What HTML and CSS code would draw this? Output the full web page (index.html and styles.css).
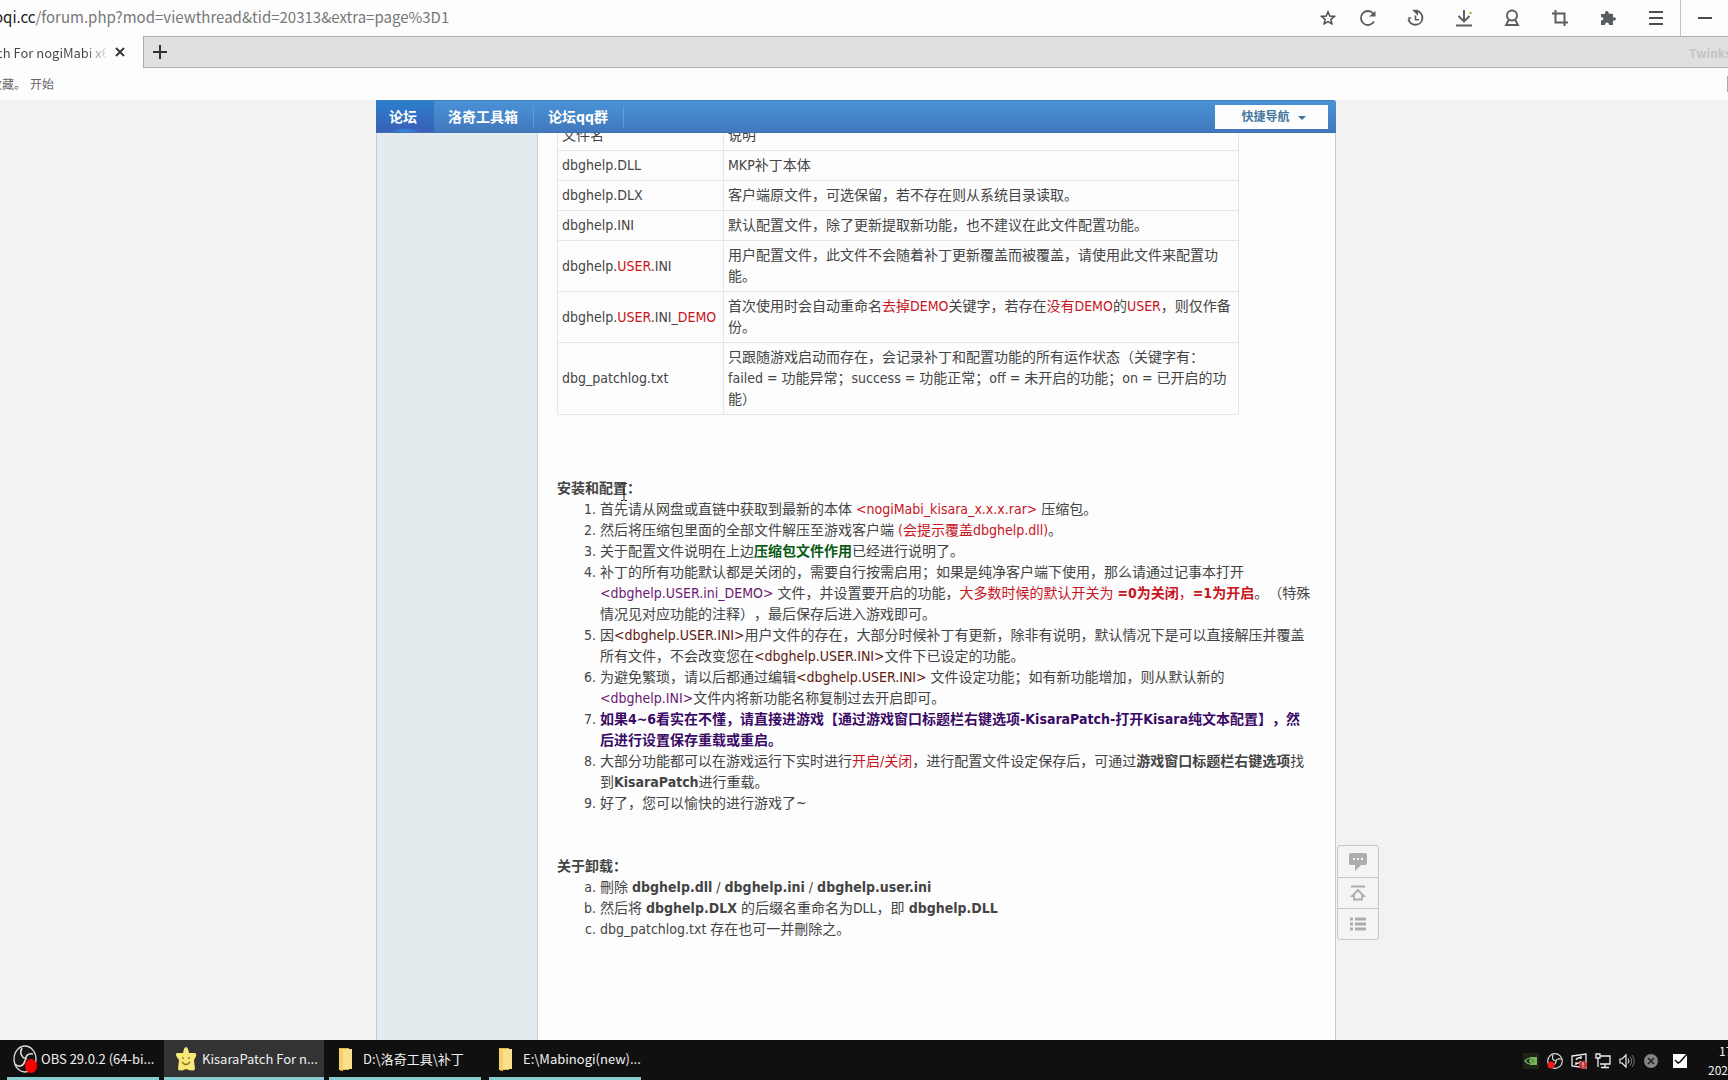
FILE: index.html
```html
<!DOCTYPE html>
<html lang="zh-CN">
<head>
<meta charset="utf-8">
<title>KisaraPatch For nogiMabi x64</title>
<link rel="stylesheet" href="styles.css">
</head>
<body>
<header class="chrome">
  <div class="address-row">
    <div class="url"><span class="host">oqi.cc</span>/forum.php?mod=viewthread&amp;tid=20313&amp;extra=page%3D1</div>
    <div class="tools">
      <button class="tool tool-star" aria-label="收藏"><svg width="16" height="16" viewBox="0 0 16 16"><path d="M8 1.8l1.8 4.2 4.5.4-3.4 3 1 4.4L8 11.5l-3.900 2.300 1-4.400-3.400-3 4.500-.4z" fill="none" stroke="#4a4d50" stroke-width="1.500"/></svg></button>
      <button class="tool" aria-label="刷新"><svg width="18" height="18" viewBox="0 0 18 18"><path d="M14.300 4.500A7 7 0 1 0 15 12.500" fill="none" stroke="#5a5d60" stroke-width="1.800"/><path d="M16.500 2v5.500H10z" fill="#5a5d60"/></svg></button>
      <button class="tool" aria-label="历史"><svg width="18" height="18" viewBox="0 0 18 18"><path d="M10 2a7 7 0 1 1-8.500 8" fill="none" stroke="#5a5d60" stroke-width="1.900"/><path d="M5 .8h6v6z" fill="#5a5d60"/><path d="M8.500 6.500v4.200H12M1.200 9h3" fill="none" stroke="#5a5d60" stroke-width="1.600"/></svg></button>
      <button class="tool" aria-label="下载"><svg width="18" height="18" viewBox="0 0 18 18"><path d="M9 1v12M3.500 7L9 12.500 14.500 7M1 16.500h16" fill="none" stroke="#5a5d60" stroke-width="1.900"/><circle cx="15.500" cy="4" r="1.300" fill="#8bc34a"/></svg></button>
      <button class="tool" aria-label="用户"><svg width="18" height="18" viewBox="0 0 18 18"><circle cx="9" cy="6.500" r="5" fill="none" stroke="#5a5d60" stroke-width="1.900"/><path d="M6 10.500L3 16h12l-3-5.500" fill="none" stroke="#5a5d60" stroke-width="1.900"/></svg></button>
      <button class="tool" aria-label="截图"><svg width="18" height="18" viewBox="0 0 18 18"><path d="M1 4.500h12.500V17M4.500 1v12.500H17" fill="none" stroke="#5a5d60" stroke-width="2"/></svg></button>
      <button class="tool" aria-label="扩展"><svg width="18" height="18" viewBox="0 0 18 18"><path d="M2 5h4C5 1 10.500 1 9.500 4.500L14 5v3.500c4-1 4 4 0 3V16h-4c.5-3.500-4.500-3.500-4 0H2v-4.500c3.200 0 3.200-3.500 0-3.500z" fill="#5a5d60"/></svg></button>
      <button class="tool" aria-label="菜单"><svg width="18" height="18" viewBox="0 0 18 18"><path d="M2 3h14M2 9h14M2 15h14" stroke="#4a4d50" stroke-width="2"/></svg></button>
      <button class="tool tool-min" aria-label="最小化"><svg width="18" height="18" viewBox="0 0 18 18"><path d="M2 9h14" stroke="#4a4d50" stroke-width="2"/></svg></button>
    </div>
  </div>
  <div class="tab-row">
    <div class="tab"><span class="tab-title">ch For nogiMabi x6</span><button class="tab-close" aria-label="关闭标签"><svg width="10" height="10" viewBox="0 0 10 10"><path d="M1 1l8 8M9 1L1 9" stroke="#333" stroke-width="1.800"/></svg></button></div>
    <div class="tab-strip">
      <button class="tab-new" aria-label="新建标签"><svg width="14" height="14" viewBox="0 0 14 14"><path d="M7 0v14M0 7h14" stroke="#333" stroke-width="2"/></svg></button>
      <span class="theme">Twinks</span>
    </div>
  </div>
  <div class="bookmarks"><span class="hint">收藏。</span><a href="#start">开始</a><span class="edge"></span></div>
</header>

<main class="page">
  <div class="forum">
    <nav class="nav">
      <a class="nav-item nav-active" href="#forum">论坛</a>
      <a class="nav-item" href="#tools">洛奇工具箱</a>
      <a class="nav-item" href="#qq">论坛qq群</a>
      <button class="quick">快捷导航<span class="caret"></span></button>
    </nav>
    <div class="thread">
      <aside class="author"></aside>
      <article class="post">
        <table class="files">
          <tr><td>文件名</td><td>说明</td></tr>
          <tr><td>dbghelp.DLL</td><td>MKP补丁本体</td></tr>
          <tr><td>dbghelp.DLX</td><td>客户端原文件，可选保留，若不存在则从系统目录读取。</td></tr>
          <tr><td>dbghelp.INI</td><td>默认配置文件，除了更新提取新功能，也不建议在此文件配置功能。</td></tr>
          <tr><td>dbghelp.<span class="red">USER</span>.INI</td><td>用户配置文件，此文件不会随着补丁更新覆盖而被覆盖，请使用此文件来配置功<br>能。</td></tr>
          <tr><td>dbghelp.<span class="red">USER</span>.INI_<span class="red">DEMO</span></td><td>首次使用时会自动重命名<span class="red">去掉DEMO</span>关键字，若存在<span class="red">没有DEMO</span>的<span class="red">USER</span>，则仅作备<br>份。</td></tr>
          <tr><td>dbg_patchlog.txt</td><td>只跟随游戏启动而存在，会记录补丁和配置功能的所有运作状态（关键字有：<br>failed = 功能异常；success = 功能正常；off = 未开启的功能；on = 已开启的功<br>能）</td></tr>
        </table>

        <h2>安装和配置：</h2>
        <ol class="steps">
          <li>首先请从网盘或直链中获取到最新的本体 <span class="red">&lt;nogiMabi_kisara_x.x.x.rar&gt;</span> 压缩包。</li>
          <li>然后将压缩包里面的全部文件解压至游戏客户端 <span class="red">(会提示覆盖dbghelp.dll)</span>。</li>
          <li>关于配置文件说明在上边<b class="green">压缩包文件作用</b>已经进行说明了。</li>
          <li>补丁的所有功能默认都是关闭的，需要自行按需启用；如果是纯净客户端下使用，那么请通过记事本打开<br><span class="purple">&lt;dbghelp.USER.ini_DEMO&gt;</span> 文件，并设置要开启的功能，<span class="red">大多数时候的默认开关为 <b>=0为关闭</b>，<b>=1为开启</b></span>。（特殊<br>情况见对应功能的注释），最后保存后进入游戏即可。</li>
          <li>因<span class="brown">&lt;dbghelp.USER.INI&gt;</span>用户文件的存在，大部分时候补丁有更新，除非有说明，默认情况下是可以直接解压并覆盖<br>所有文件，不会改变您在<span class="brown">&lt;dbghelp.USER.INI&gt;</span>文件下已设定的功能。</li>
          <li>为避免繁琐，请以后都通过编辑<span class="brown">&lt;dbghelp.USER.INI&gt;</span> 文件设定功能；如有新功能增加，则从默认新的<br><span class="purple">&lt;dbghelp.INI&gt;</span>文件内将新功能名称复制过去开启即可。</li>
          <li><b class="indigo">如果4~6看实在不懂，请直接进游戏【通过游戏窗口标题栏右键选项-KisaraPatch-打开Kisara纯文本配置】，然<br>后进行设置保存重载或重启。</b></li>
          <li>大部分功能都可以在游戏运行下实时进行<span class="red">开启/关闭</span>，进行配置文件设定保存后，可通过<b>游戏窗口标题栏右键选项</b>找<br>到<b>KisaraPatch</b>进行重载。</li>
          <li>好了，您可以愉快的进行游戏了~</li>
        </ol>

        <h2>关于卸载：</h2>
        <ol class="steps alpha">
          <li>刪除 <b>dbghelp.dll</b> / <b>dbghelp.ini</b> / <b>dbghelp.user.ini</b></li>
          <li>然后将 <b>dbghelp.DLX</b> 的后缀名重命名为DLL，即 <b>dbghelp.DLL</b></li>
          <li>dbg_patchlog.txt 存在也可一并刪除之。</li>
        </ol>
        <svg class="pointer" width="8" height="18" viewBox="0 0 8 18"><path d="M1 .5h2.500M4.500 .5H7M4 1v16M1 17.500h2.500M4.500 17.500H7" stroke="#222" fill="none"/></svg>
      </article>
    </div>
    <div class="side">
      <button aria-label="回复"><svg width="18" height="18" viewBox="0 0 18 18"><path d="M2 0h14q2 0 2 2v8q0 2-2 2h-4l-6 6v-6H2q-2 0-2-2V2q0-2 2-2z" fill="#adadad"/><path d="M4 6h2M8 6h2M12 6h2" stroke="#f4f4f4" stroke-width="2"/></svg></button>
      <button aria-label="返回顶部"><svg width="18" height="16" viewBox="0 0 18 16"><path d="M2 1.500h14" stroke="#adadad" stroke-width="2"/><path d="M9 5L3 11h2v3.500h8V11h2z" fill="none" stroke="#adadad" stroke-width="1.800"/></svg></button>
      <button aria-label="返回列表"><svg width="18" height="16" viewBox="0 0 18 16"><path d="M1 3h3M6 3h11M1 8h3M6 8h11M1 13h3M6 13h11" stroke="#adadad" stroke-width="3"/></svg></button>
    </div>
  </div>
</main>

<footer class="taskbar">
  <button class="task task-obs"><svg width="24" height="30" viewBox="0 0 24 30"><ellipse cx="12" cy="15" rx="11" ry="13" fill="#151515" stroke="#ddd" stroke-width="1.300"/><path d="M9 4c-3 5 0 10 4 11M20 10c-5-1-8 2-7 6M2 20c4 4 9 2 10-4" fill="none" stroke="#ddd" stroke-width="1.600"/><ellipse cx="18" cy="22" rx="6" ry="7" fill="#f00"/></svg>OBS 29.0.2 (64-bi...</button>
  <button class="task task-on"><svg width="24" height="28" viewBox="0 0 24 28"><path d="M12 2q2 0 3 6l6 0q3 1-1 7l1 9q-1 3-9 0-7 3-8 0l1-9Q0 9 3 8h6q1-6 3-6z" fill="#f7e878"/><path d="M9 12v2M15 12v2M8 17q4 5 8 0" fill="none" stroke="#8a7420" stroke-width="1.300"/></svg>KisaraPatch For n...</button>
  <button class="task"><svg width="24" height="26" viewBox="0 0 24 26"><path d="M6 2h10v22H6z" fill="#e2b64e"/><path d="M8 3h11v20H8z" fill="#fbdf8c"/><path d="M6 2l4 2v21l-4-1z" fill="#f6cf69"/></svg><span>D:\洛奇工具\补丁</span></button>
  <button class="task task-last"><svg width="24" height="26" viewBox="0 0 24 26"><path d="M6 2h10v22H6z" fill="#e2b64e"/><path d="M8 3h11v20H8z" fill="#fbdf8c"/><path d="M6 2l4 2v21l-4-1z" fill="#f6cf69"/></svg><span>E:\Mabinogi(new)...</span></button>
  <div class="tray">
    <svg width="16" height="16" viewBox="0 0 16 16"><path d="M0 0h16v16H0z" fill="#1c2418"/><path d="M7 4h7v8H7z" fill="#76b35a"/><path d="M2 8q5-6 10 0-5 6-10 0z" fill="#1c2418" stroke="#76b35a" stroke-width="1.200"/><circle cx="8" cy="8" r="2" fill="#76b35a"/></svg>
    <svg width="16" height="16" viewBox="0 0 16 16"><circle cx="8" cy="8" r="7.300" fill="none" stroke="#ddd" stroke-width="1.200"/><path d="M6 2q-2 5 3 6M14 6q-5-1-5 3M3 11q4 3 6-2" stroke="#ddd" stroke-width="1.200" fill="none"/><circle cx="4" cy="12" r="3.500" fill="#f01818"/></svg>
    <svg width="16" height="16" viewBox="0 0 16 16"><path d="M1 3l14-2v14L1 13z" fill="none" stroke="#eee" stroke-width="1.300"/><path d="M5 7q1-3 5-2V3M10 8q-1 3-5 2v2" fill="none" stroke="#eee" stroke-width="1.400"/><circle cx="12" cy="12" r="4" fill="#c9363c"/><path d="M12 9.500v3M12 13.500v1" stroke="#fff"/></svg>
    <svg width="16" height="16" viewBox="0 0 16 16"><path d="M5 3h10v8H5M10 11v3M6 14.500h8M1 1h4v4H1zM3 5v9" fill="none" stroke="#eee" stroke-width="1.300"/></svg>
    <svg width="16" height="16" viewBox="0 0 16 16"><path d="M1 6h2l4-4v12l-4-4H1z" fill="none" stroke="#eee" stroke-width="1.200"/><path d="M9 5.500q2 2.500 0 5" stroke="#eee" fill="none"/><path d="M11 3.500q3.500 4.500 0 9M13 2q4.500 6 0 12" stroke="#777" fill="none"/></svg>
    <svg width="16" height="16" viewBox="0 0 16 16"><circle cx="8" cy="8" r="7" fill="#858585"/><path d="M5 5l6 6M11 5l-6 6" stroke="#222" stroke-width="1.600"/></svg>
    <svg class="pen" width="16" height="16" viewBox="0 0 16 16"><path d="M1 1h14v14H1z" fill="#fff"/><path d="M15 1L8 9M3 7l3 3 2-1" stroke="#111" stroke-width="1.600" fill="none"/></svg>
  </div>
  <div class="clock"><span class="time">17</span><span>202</span></div>
</footer>
</body>
</html>
```
FILE: styles.css
```css
* { box-sizing: border-box; }
body {
  margin: 0;
  height: 100vh;
  display: flex;
  flex-direction: column;
  overflow: hidden;
  background: #f2f2f2;
  color: #444;
  font: 14px/21px "DejaVu Sans Condensed", "Noto Sans CJK SC", sans-serif;
  text-spacing-trim: space-all;
}
button { border: 0; padding: 0; margin: 0; background: none; font: inherit; color: inherit; }
a { color: inherit; text-decoration: none; }
svg { display: block; flex: none; }

.chrome { background: #fdfdfd; font-family: "Noto Sans CJK SC", sans-serif; flex: none; }
.address-row { display: flex; justify-content: space-between; height: 36px; overflow: hidden; }
.url { margin-left: -6px; font-size: 15px; line-height: 34px; color: #777; white-space: nowrap; }
.host { color: #222; }
.tools { display: flex; }
.tool { width: 48px; display: flex; align-items: center; justify-content: center; }
.tool-star { width: 32px; }
.tool-min { border-left: 1px solid #c4c4c4; }

.tab-row { display: flex; height: 32px; }
.tab { width: 143px; display: flex; align-items: center; justify-content: space-between; padding-right: 18px; overflow: hidden; }
.tab-title {
  width: 110px;
  margin-left: -4px;
  font-size: 13px;
  white-space: nowrap;
  overflow: hidden;
  color: transparent;
  background: linear-gradient(90deg, #444 80%, #ddd);
  background-clip: text;
}
.tab-strip {
  flex: 1;
  display: flex;
  align-items: center;
  justify-content: space-between;
  padding-left: 9px;
  background: #e0e0e0;
  border: solid #adadad;
  border-width: 1px 0 1px 1px;
  overflow: hidden;
}
.theme { width: 39px; font-size: 12px; font-weight: bold; color: #c4c4c4; }
.bookmarks { display: flex; align-items: center; gap: 4px; height: 31px; margin-bottom: 1px; overflow: hidden; font-size: 12px; color: #666; }
.hint { margin-left: -10px; }
.edge { margin-left: auto; width: 1px; height: 16px; background: #aaa; }

.page { flex: 1; min-height: 0; padding-right: 16px; overflow: hidden; display: flex; justify-content: center; }
.forum { position: relative; width: 960px; display: flex; flex-direction: column; }
.nav {
  position: relative;
  z-index: 1;
  flex: none;
  display: flex;
  align-items: center;
  height: 33px;
  padding-right: 8px;
  color: #fff;
  font-weight: bold;
  background: linear-gradient(#4a92d6, #4278bd);
  border-top: 1px solid #3b7fc4;
  border-bottom: 1px solid #3f72ad;
  border-radius: 0 3px 0 0;
}
.nav-item { padding: 1px 15px 0 14px; border-right: 1px solid #5b9be0; line-height: 20px; }
.nav-active {
  padding: 1px 17px 0 13px;
  border: 0;
  line-height: 30px;
  background: radial-gradient(ellipse 16px 4px at 50% 100%, #2f9bea, transparent), linear-gradient(#2a7fcb, #3b5fb8);
}
.quick {
  margin-left: auto;
  width: 113px;
  height: 24px;
  padding: 2px 0 0 4px;
  display: flex;
  align-items: center;
  justify-content: center;
  gap: 8px;
  background: #fdfdfd;
  color: #4679a0;
  font-size: 12px;
}
.caret { border: solid transparent; border-width: 4px 4px 0; border-top-color: #3f7298; }

.thread { flex: 1; min-height: 0; display: flex; border: solid #c2cdd2; border-width: 0 1px; background: #fdfdfd; }
.author { width: 161px; flex: none; background: #e3ebee; border-right: 1px solid #c2cfd8; }
.post { position: relative; flex: 1; margin-top: -13px; padding: 0 18px 0 19px; }
.files { width: 682px; border-collapse: collapse; table-layout: fixed; }
.files td { padding: 4px; border: 1px solid #dfe8f0; white-space: nowrap; }
.files td:first-child { width: 166px; }
h2 { margin: 63px 0 0; font-size: 14px; line-height: 21px; }
.steps { margin: 0; padding-left: 43px; list-style: decimal; white-space: nowrap; }
.steps + h2 { margin-top: 42px; }
.alpha { list-style: lower-alpha; }
.red { color: #c8141c; }
.green { color: #0a5a14; }
.purple { color: #6a1a72; }
.brown { color: #5c1a10; }
.indigo { color: #3a0a66; }
.pointer { position: absolute; left: 82px; top: 363px; }

.side { position: absolute; left: 961px; bottom: 100px; width: 42px; border: 1px solid #c8c8c8; border-radius: 3px; background: #f4f4f4; }
.side button { display: flex; align-items: center; justify-content: center; width: 100%; height: 31px; }
.side button + button { border-top: 1px solid #c8c8c8; }

.taskbar { flex: none; display: flex; height: 40px; padding-left: 7px; overflow: hidden; background: #101010; color: #f0f0f0; font: 13px/20px "Noto Sans CJK SC", sans-serif; }
.task { width: 152px; margin-right: 8px; padding-left: 4px; display: flex; align-items: center; gap: 4px; border-bottom: 3px solid #86cdd2; white-space: nowrap; }
.task span { padding-left: 2px; }
.task-obs { margin-right: 5px; padding-left: 6px; }
.task-on { width: 160px; margin-right: 5px; padding-left: 10px; background: #333; }
.tray { margin-left: auto; display: flex; align-items: center; gap: 8px; padding-top: 1px; }
.pen { margin-left: 5px; }
.clock { width: 40px; padding: 1px 0 0 20px; display: flex; flex-direction: column; font-size: 12px; line-height: 19px; }
.time { padding-left: 11px; }
```
